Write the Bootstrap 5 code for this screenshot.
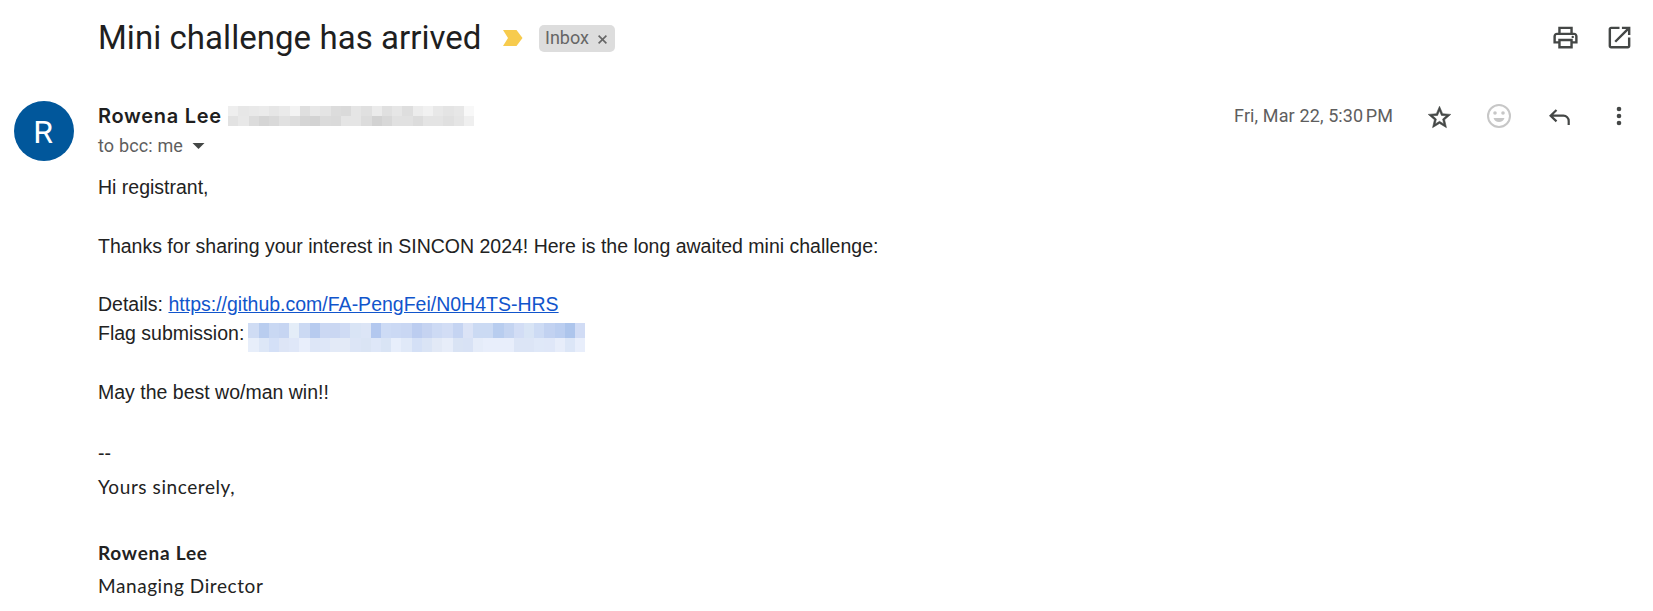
<!DOCTYPE html>
<html lang="en">
<head>
<meta charset="utf-8">
<meta name="viewport" content="width=device-width, initial-scale=1">
<title>Mini challenge has arrived</title>
<link href="https://cdn.jsdelivr.net/npm/bootstrap@5.3.0/dist/css/bootstrap.min.css" rel="stylesheet">
<style>
body{background:#fff;color:#222;font-family:"Liberation Sans",Arial,sans-serif;overflow:hidden}
svg{display:block;flex:none}
.ui{font-family:Roboto,"Liberation Sans",sans-serif}
.topbar{height:76px;padding-left:98px;padding-right:19.5px}
.subject{font-size:33px;line-height:40px;color:#1f1f1f;font-weight:400;letter-spacing:.05px;width:382px;white-space:nowrap}
.importance{margin-left:23px}
.tag{background:#ddd;color:#666;height:27px;border-radius:5px;font-size:18px;line-height:26px;width:76px;padding:0 8px 0 6px}
.tag svg{margin-top:3px}
.tools{color:#444746}
.page-tools{gap:25px;margin-top:-1px}
.msg{padding:25px 20px 0 14px;gap:24px}
.avatar{width:60px;height:60px;background:#01579b;color:#fff;font-size:32px;padding:2px 2px 0 0}
.sender{height:30px}
.fullname{font-family:Inter,sans-serif;font-size:20px;font-weight:600;letter-spacing:.7px;color:#1f1f1f;line-height:30px;width:130px}
.meta{color:#5e5e5e;font-size:18px;line-height:30px}
.recipients{letter-spacing:.15px}
.date{margin-right:33px;letter-spacing:.12px}
.star{margin-right:34px;margin-top:3px}
.emoji{margin-right:38px}
.reply{margin-right:46px;margin-top:2px}
.more{margin-right:11px}
.mosaic{display:grid;flex:none}
.mosaic-gray{grid-template-columns:repeat(24,1fr);grid-auto-rows:10px;width:246px;margin-top:5px}
.mosaic-blue{grid-template-columns:repeat(33,1fr);grid-template-rows:15px 14px;width:337px;margin:4px 0 0 4px}
.copy{font-size:19.5px;line-height:29.25px;padding-top:12px}
.copy p{margin:0 0 29.25px}
.copy a{color:#1155cc}
.copy .flag{height:29.25px}
.copy .dashes{padding-top:3px;margin-bottom:-3px}
.sig{font-family:Lato,sans-serif;font-size:19px;line-height:33px;letter-spacing:.58px;margin-top:4.5px}
.sig b{letter-spacing:.75px}
</style>
</head>
<body>
<header class="topbar d-flex align-items-center ui">
  <h1 class="subject mb-0">Mini challenge has arrived</h1>
  <svg class="importance" width="20" height="16" viewBox="0 0 20 16"><path d="M0 0h13.5L19.500 8l-6 8H0l5-8z" fill="#f7cb4d"/></svg>
  <span class="tag ms-3 d-flex align-items-center justify-content-between">Inbox
    <svg width="9" height="9" viewBox="0 0 9 9"><path d="M.6.6l7.800 7.800M8.400.6L.6 8.400" stroke="#666" stroke-width="1.600"/></svg></span>
  <div class="tools page-tools d-flex ms-auto">
    <svg width="29" height="29" viewBox="0 0 24 24" fill="currentColor"><path d="M19 8h-1V3H6v5H5c-1.660 0-3 1.340-3 3v6h4v4h12v-4h4v-6c0-1.660-1.340-3-3-3zM8 5h8v3H8V5zm8 14H8v-4h8v4zm2-4v-2H6v2H4v-4c0-.55.45-1 1-1h14c.55 0 1 .45 1 1v4h-2z"/><circle cx="18" cy="11.500" r="1"/></svg>
    <svg width="29" height="29" viewBox="0 0 24 24" fill="currentColor"><path d="M19 19H5V5h7V3H5c-1.110 0-2 .9-2 2v14c0 1.100.89 2 2 2h14c1.100 0 2-.9 2-2v-7h-2v7zM14 3v2h3.590l-9.830 9.830 1.410 1.410L19 6.410V10h2V3h-7z"/></svg>
  </div>
</header>
<main class="msg d-flex">
  <div class="avatar ui rounded-circle d-flex align-items-center justify-content-center flex-shrink-0">R</div>
  <div class="flex-grow-1">
    <div class="sender d-flex ui">
      <span class="fullname">Rowena Lee</span>
      <div class="mosaic mosaic-gray" data-colors="eee7e9ebe6eaf3dfe8e4dcdae5e0ebe0e6deecf1e8e4e7f8e2e8dcd5d9e1ddd5d3dbdae5e5dcd2d8e1e1dce4e4e0e5ef" data-size="2"></div>
      <div class="tools d-flex align-items-center ms-auto">
        <span class="meta date">Fri, Mar 22, 5:30&#8239;PM</span>
        <svg class="star" width="27" height="27" viewBox="0 0 24 24" fill="currentColor" stroke="currentColor" stroke-width=".5"><path d="M22 9.240l-7.190-.62L12 2 9.190 8.630 2 9.240l5.460 4.730L5.820 21 12 17.270 18.180 21l-1.630-7.030L22 9.240zM12 15.400l-3.760 2.270 1-4.280-3.320-2.880 4.380-.38L12 6.100l1.710 4.040 4.380.38-3.320 2.880 1 4.280L12 15.400z"/></svg>
        <svg class="emoji" width="24" height="24" viewBox="0 0 24 24"><circle cx="12" cy="12" r="11" fill="none" stroke="#c7c7c7" stroke-width="2"/><circle cx="8" cy="9" r="1.800" fill="#c7c7c7"/><circle cx="16" cy="9" r="1.800" fill="#c7c7c7"/><path d="M6.500 14h11a5.800 5.800 0 0 1-11 0z" fill="#c7c7c7"/></svg>
        <svg class="reply" width="21" height="17" viewBox="0 0 21 17" fill="none" stroke="currentColor" stroke-width="2.200"><path d="M7.500 1L1.600 6.700l5.900 5.700M2 6.700h12.500a5.200 5.200 0 0 1 5.200 5.200V16"/></svg>
        <svg class="more" width="6" height="20" viewBox="0 0 6 20" fill="currentColor"><circle cx="3" cy="3" r="2.300"/><circle cx="3" cy="10" r="2.300"/><circle cx="3" cy="17" r="2.300"/></svg>
      </div>
    </div>
    <div class="meta recipients ui d-flex align-items-center">to bcc: me
      <svg class="ms-2" width="15" height="6" viewBox="0 0 15 6"><path d="M1.500 0h12L7.500 6z" fill="#444746"/></svg></div>
    <div class="copy">
      <p>Hi registrant,</p>
      <p>Thanks for sharing your interest in SINCON 2024! Here is the long awaited mini challenge:</p>
      <div>Details: <a href="#">https://github.com/FA-PengFei/N0H4TS-HRS</a></div>
      <div class="flag d-flex">Flag submission:<div class="mosaic mosaic-blue" data-size="6" data-colors="cfdcf4b9cdefc9d8f3c6d5f2e4edf8cbd9f3b7cbefcbd8f3cad7f2cfdbf4d9e4f5dce5f6b3c8efcddbf5cbd9f4c9d7f3bccdf0c5d3f1cddaf4d2ddf5c5d4f2dbe3f6cbdaf3cbdaf3b8cdefc4d4f1d2ddf5d8e4f5cddbf4c2d2f1bbcef0adc5ecd1dcf5e7eefadde7f7d4e0f7dde5f6dfe7f8e8eefbdde6f7dee7f8e3eaf7e3eaf7dce5f6dae4f4dee7f8d9e4f5e7eefbe0e9f8d4e0f6dae4f5e2e9f6e7edf9d9e3f4d8e2f5e5ecf9e8eefbe8eefbe8eefbdce5f6dce5f6dfe8f8dfe7f8e7edfadce6f7e8eefb"></div></div>
      <p class="mb-0">&nbsp;</p>
      <p>May the best wo/man win!!</p>
      <div class="dashes">--</div>
    </div>
    <div class="sig">Yours sincerely,<br><br><b>Rowena Lee</b><br>Managing Director</div>
  </div>
</main>
<script src="https://cdn.jsdelivr.net/npm/bootstrap@5.3.0/dist/js/bootstrap.bundle.min.js"></script>
<script>
// Fill the redaction mosaics from their packed hex colours (2 digits = gray level, 6 = rgb)
document.querySelectorAll('.mosaic').forEach(m=>{
  const n=+m.dataset.size;
  for(let i=0;i<m.dataset.colors.length;i+=n){
    const c=m.dataset.colors.substr(i,n),d=document.createElement('div');
    d.style.background='#'+(n===2?c+c+c:c);
    m.appendChild(d);
  }
});
</script>
</body>
</html>
